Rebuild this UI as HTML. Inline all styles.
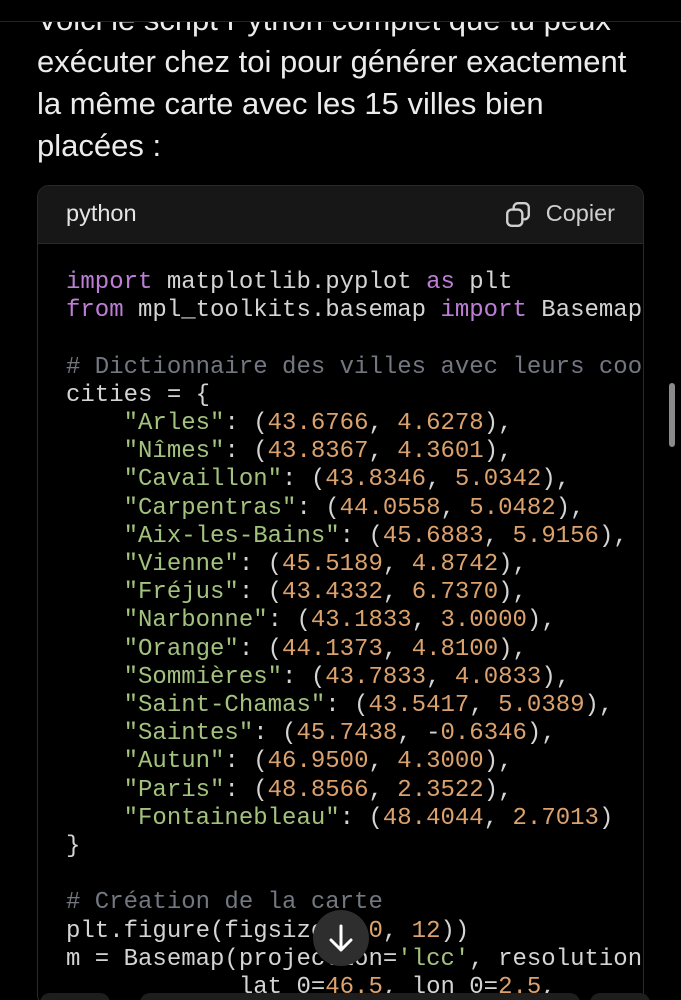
<!DOCTYPE html>
<html><head><meta charset="utf-8"><style>
html,body{margin:0;padding:0;background:#000;width:681px;height:1000px;overflow:hidden;position:relative}
.p{position:absolute;left:37px;top:-1px;width:640px;font-family:"Liberation Sans",sans-serif;font-size:31px;line-height:42px;color:#ececec;white-space:nowrap}
.blk{position:absolute;left:37px;top:185px;width:605px;height:820px;border:1px solid #2a2a2a;border-radius:12px;overflow:hidden;background:#000}
.hd{height:57px;background:#171717;border-bottom:1px solid #2a2a2a;position:relative;font-family:"Liberation Sans",sans-serif;font-size:23.5px;color:#e5e5e5}
.hd .l{position:absolute;left:28px;top:14px}
.hd .r{position:absolute;right:28px;top:14px;color:#d0d0d0}
.hd svg{position:absolute;left:467px;top:15px}
pre{margin:0;padding:25px 0 0 28px;font-family:"Liberation Mono",monospace;font-size:24px;line-height:28.2px;color:#d4d4d4;white-space:pre}
.k{color:#bd7fd6}.s{color:#a3c27e}.n{color:#dba26e}.c{color:#727780}
.sb{position:absolute;left:669px;top:383px;width:6px;height:64px;border-radius:3px;background:#8a8a8a}
.dn{position:absolute;left:313px;top:910px;width:56px;height:56px;border-radius:28px;background:#2e2e2e}
.bar{position:absolute;top:993px;height:20px;background:#1e1e1e;border-radius:10px}
.top{position:absolute;left:0;top:0;width:681px;height:21px;background:#000;border-bottom:1px solid #222}
</style></head><body>
<div class="p">Voici le script Python complet que tu peux<br>exécuter chez toi pour générer exactement<br>la même carte avec les 15 villes bien<br>placées :</div>
<div class="top"></div>
<div class="blk">
<div class="hd"><span class="l">python</span>
<svg width="26" height="28" viewBox="0 0 24 26" fill="none" stroke="#d0d0d0" stroke-width="2.2"><rect x="2" y="8" width="14" height="15" rx="4"/><path d="M8 8V6a4 4 0 0 1 4-4h6a4 4 0 0 1 4 4v7a4 4 0 0 1-4 4h-2"/></svg>
<span class="r">Copier</span></div>
<pre><span class="k">import</span> matplotlib.pyplot <span class="k">as</span> plt
<span class="k">from</span> mpl_toolkits.basemap <span class="k">import</span> Basemap

<span class="c"># Dictionnaire des villes avec leurs coordonnées</span>
cities = {
    <span class="s">"Arles"</span>: (<span class="n">43.6766</span>, <span class="n">4.6278</span>),
    <span class="s">"Nîmes"</span>: (<span class="n">43.8367</span>, <span class="n">4.3601</span>),
    <span class="s">"Cavaillon"</span>: (<span class="n">43.8346</span>, <span class="n">5.0342</span>),
    <span class="s">"Carpentras"</span>: (<span class="n">44.0558</span>, <span class="n">5.0482</span>),
    <span class="s">"Aix-les-Bains"</span>: (<span class="n">45.6883</span>, <span class="n">5.9156</span>),
    <span class="s">"Vienne"</span>: (<span class="n">45.5189</span>, <span class="n">4.8742</span>),
    <span class="s">"Fréjus"</span>: (<span class="n">43.4332</span>, <span class="n">6.7370</span>),
    <span class="s">"Narbonne"</span>: (<span class="n">43.1833</span>, <span class="n">3.0000</span>),
    <span class="s">"Orange"</span>: (<span class="n">44.1373</span>, <span class="n">4.8100</span>),
    <span class="s">"Sommières"</span>: (<span class="n">43.7833</span>, <span class="n">4.0833</span>),
    <span class="s">"Saint-Chamas"</span>: (<span class="n">43.5417</span>, <span class="n">5.0389</span>),
    <span class="s">"Saintes"</span>: (<span class="n">45.7438</span>, -<span class="n">0.6346</span>),
    <span class="s">"Autun"</span>: (<span class="n">46.9500</span>, <span class="n">4.3000</span>),
    <span class="s">"Paris"</span>: (<span class="n">48.8566</span>, <span class="n">2.3522</span>),
    <span class="s">"Fontainebleau"</span>: (<span class="n">48.4044</span>, <span class="n">2.7013</span>)
}

<span class="c"># Création de la carte</span>
plt.figure(figsize=(<span class="n">10</span>, <span class="n">12</span>))
m = Basemap(projection=<span class="s">'lcc'</span>, resolution=<span class="s">'h'</span>,
            lat_0=<span class="n">46.5</span>, lon_0=<span class="n">2.5</span>,</pre>
</div>
<div class="sb"></div>
<div class="dn"><svg width="56" height="56" viewBox="0 0 56 56" fill="none" stroke="#fff" stroke-width="3" stroke-linecap="round" stroke-linejoin="round"><path d="M28 16v24M18 30l10 10 10-10"/></svg></div>
<div class="bar" style="left:40px;width:70px"></div>
<div class="bar" style="left:140px;width:440px"></div>
<div class="bar" style="left:590px;width:60px"></div>
</body></html>
